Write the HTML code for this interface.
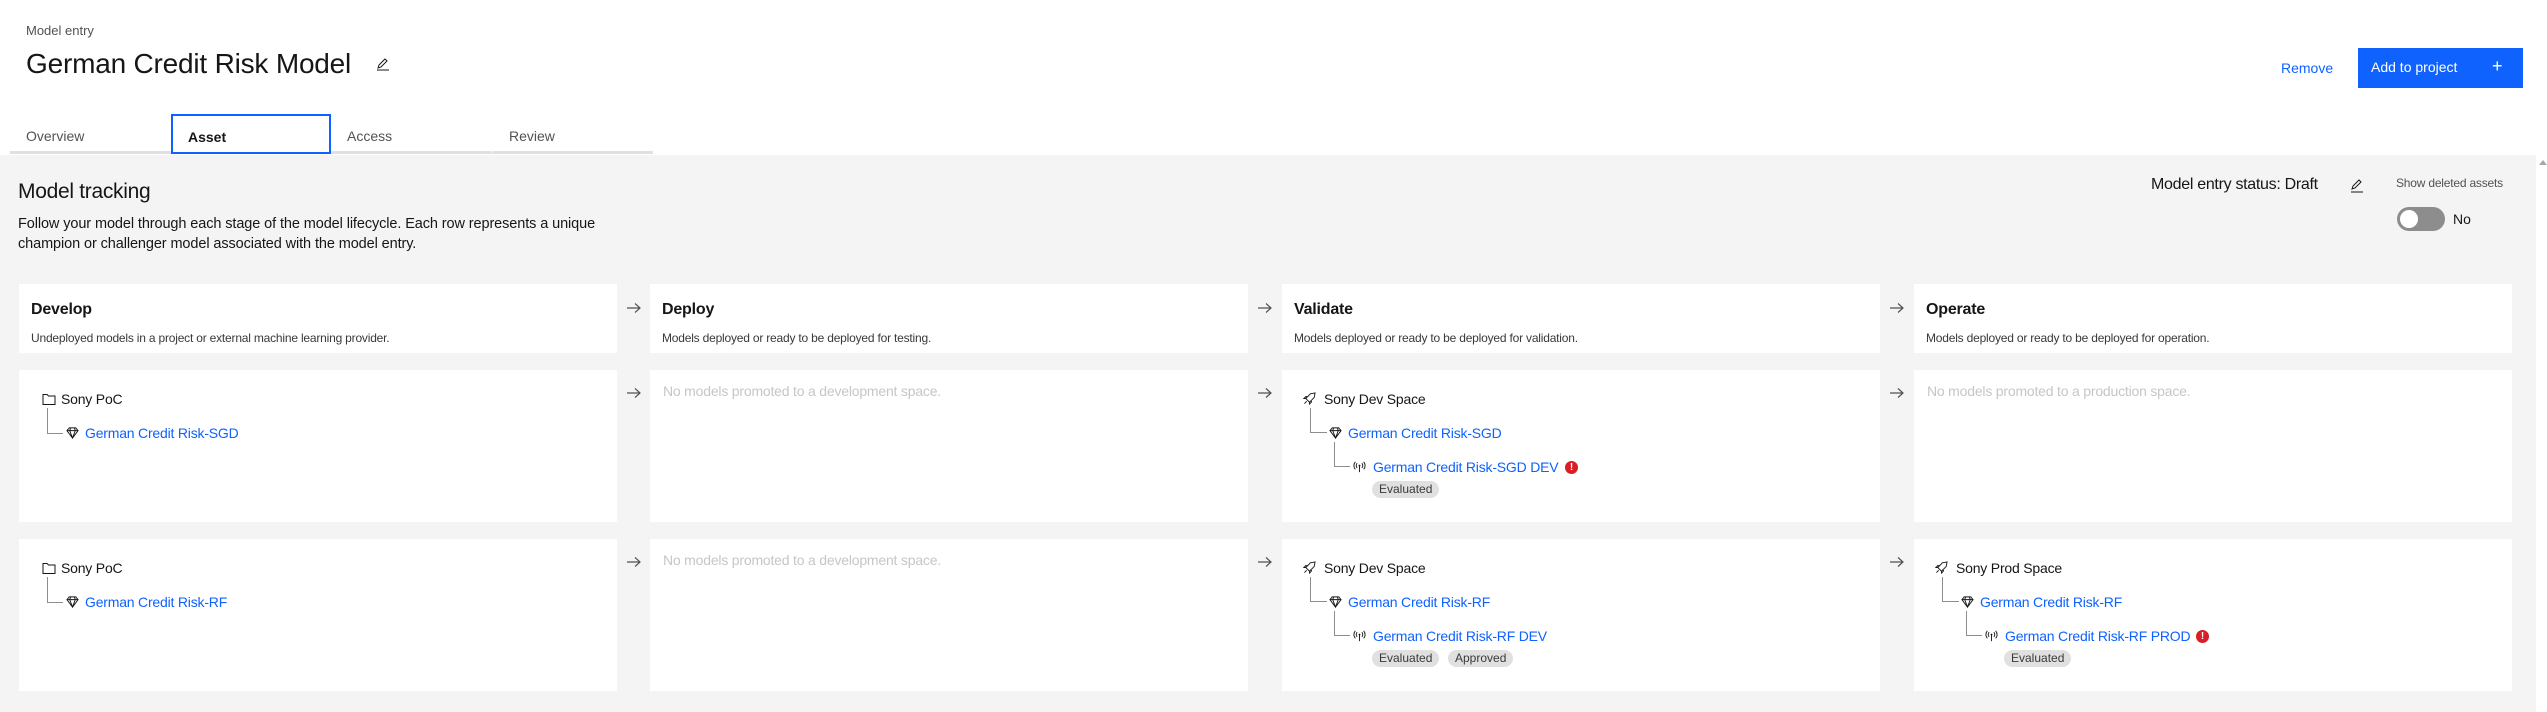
<!DOCTYPE html>
<html><head><meta charset="utf-8"><style>
*{margin:0;padding:0;box-sizing:border-box}
body{width:2547px;height:712px;overflow:hidden;background:#fff;font-family:"Liberation Sans",sans-serif;color:#161616;position:relative}
.a{position:absolute;white-space:nowrap}
.gray{position:absolute;left:0;top:155px;width:2536px;height:557px;background:#f4f4f4}
.card{position:absolute;background:#fff;width:598px}
.hd{top:284px;height:69px}
.r1{top:370px;height:152px}
.r2{top:539px;height:152px}
.ht{position:absolute;left:12px;top:17px;font-size:16px;font-weight:bold;letter-spacing:-.2px}
.hdsc{position:absolute;left:12px;top:47px;font-size:12px;color:#393939;letter-spacing:-.2px}
.none{position:absolute;left:13px;top:13px;font-size:14px;color:#c6c6c6;letter-spacing:-.2px}
.arrow{position:absolute;width:16px;height:12px}
.lnk{color:#0f62fe;font-size:14px;letter-spacing:-.2px}
.txt{font-size:14px;letter-spacing:-.2px}
.vl{position:absolute;border-left:1px solid #8d8d8d;border-bottom:1px solid #8d8d8d}
.tag{position:absolute;background:#e0e0e0;border-radius:9px;height:17px;font-size:12px;color:#393939;line-height:17px;padding:0 7px}
.err{position:absolute;width:13px;height:13px;border-radius:50%;background:#da1e28;color:#fff;font-size:10px;font-weight:bold;text-align:center;line-height:13px}
.tab{position:absolute;top:114px;height:40px;width:161px;border-bottom:3px solid #e0e0e0;font-size:14px;color:#525252;padding:14px 0 0 16px}
</style></head><body>
<svg width="0" height="0" style="position:absolute">
<defs>
<symbol id="arr" viewBox="0 0 16 12"><path d="M1 6 H14 M9 1.5 L14 6 L9 10.5" fill="none" stroke="#525252" stroke-width="1.2"/></symbol>
<symbol id="fold" viewBox="0 0 14 14"><path d="M1 2.5 H5 L6.5 4 H13 V12.5 H1 Z" fill="none" stroke="#161616" stroke-width="1"/></symbol>
<symbol id="dia" viewBox="0 0 14 14"><path d="M3.5 2 H10.5 L13 5 L7 13 L1 5 Z M1 5 H13 M5 2 L4 5 L7 13 L10 5 L9 2" fill="none" stroke="#161616" stroke-width="1"/></symbol>
<symbol id="ant" viewBox="0 0 14 14"><path d="M7 6 V13 M4.5 3.5 A3.5 3.5 0 0 0 4.5 8.5 M9.5 3.5 A3.5 3.5 0 0 1 9.5 8.5 M2.5 2 A6 6 0 0 0 2.5 10 M11.5 2 A6 6 0 0 1 11.5 10" fill="none" stroke="#161616" stroke-width="1"/><circle cx="7" cy="6" r="1" fill="#161616"/></symbol>
<symbol id="rock" viewBox="0 0 14 14"><path d="M13 1 L8 2 L3 7 L7 11 L12 6 Z M3 7 L1 7 L3 5 L5 5 M7 11 L7 13 L9 11 L9 9 M4 10 L1.5 12.5" fill="none" stroke="#161616" stroke-width="1"/></symbol>
</defs></svg>
<div class="a" style="left:26px;top:23px;font-size:13px;color:#525252">Model entry</div>
<div class="a" style="left:26px;top:48px;font-size:28px;letter-spacing:-.2px">German Credit Risk Model</div>
<svg class="a" style="left:376px;top:57px" width="14" height="14" viewBox="0 0 14 14"><path d="M2 11 L3 8 L9 2 L11 4 L5 10 Z M1 13 H13" fill="none" stroke="#161616" stroke-width="1"/></svg>
<div class="a" style="left:2281px;top:60px;font-size:14px;color:#0f62fe">Remove</div>
<div class="a" style="left:2358px;top:48px;width:165px;height:40px;background:#0f62fe;color:#fff;font-size:14px;padding:11px 0 0 13px">Add to project<span style="position:absolute;left:134px;top:8px;font-size:18px">+</span></div>
<div class="tab" style="left:10px">Overview</div>
<div class="tab" style="left:171px;border:2px solid #0f62fe;color:#161616;font-weight:bold;padding:13px 0 0 15px;width:160px">Asset</div>
<div class="tab" style="left:331px">Access</div>
<div class="tab" style="left:492px;border-left:1px solid #fff">Review</div>
<div class="gray"></div>
<div style="position:absolute;left:2536px;top:155px;width:11px;height:557px;background:#fff"></div>
<div class="a" style="left:2539px;top:160px;width:0;height:0;border-left:4px solid transparent;border-right:4px solid transparent;border-bottom:5px solid #a8a8a8"></div>
<div class="a" style="left:18px;top:180px;font-size:21px;letter-spacing:-.3px">Model tracking</div>
<div class="a" style="left:18px;top:214px;font-size:14.5px;line-height:20px;letter-spacing:-.1px">Follow your model through each stage of the model lifecycle. Each row represents a unique<br>champion or challenger model associated with the model entry.</div>
<div class="a" style="left:2151px;top:176px;font-size:16px;letter-spacing:-.3px">Model entry status: Draft</div>
<svg class="a" style="left:2350px;top:177px" width="14" height="16" viewBox="0 0 14 16"><path d="M2 12 L3 9 L9 3 L11 5 L5 11 Z M1 15 H13" fill="none" stroke="#161616" stroke-width="1"/></svg>
<div class="a" style="left:2396px;top:176px;font-size:12px;color:#525252;letter-spacing:-.2px">Show deleted assets</div>
<div class="a" style="left:2397px;top:207px;width:48px;height:24px;border-radius:12px;background:#8d8d8d"></div>
<div class="a" style="left:2400px;top:210px;width:18px;height:18px;border-radius:50%;background:#fff"></div>
<div class="a" style="left:2453px;top:211px;font-size:14px">No</div>

<div class="card hd" style="left:19px"><div class="ht">Develop</div><div class="hdsc">Undeployed models in a project or external machine learning provider.</div></div>
<div class="card hd" style="left:650px"><div class="ht">Deploy</div><div class="hdsc">Models deployed or ready to be deployed for testing.</div></div>
<div class="card hd" style="left:1282px"><div class="ht">Validate</div><div class="hdsc">Models deployed or ready to be deployed for validation.</div></div>
<div class="card hd" style="left:1914px"><div class="ht">Operate</div><div class="hdsc">Models deployed or ready to be deployed for operation.</div></div>

<svg class="arrow" style="left:626px;top:302px"><use href="#arr"/></svg>
<svg class="arrow" style="left:1257px;top:302px"><use href="#arr"/></svg>
<svg class="arrow" style="left:1889px;top:302px"><use href="#arr"/></svg>
<svg class="arrow" style="left:626px;top:387px"><use href="#arr"/></svg>
<svg class="arrow" style="left:1257px;top:387px"><use href="#arr"/></svg>
<svg class="arrow" style="left:1889px;top:387px"><use href="#arr"/></svg>
<svg class="arrow" style="left:626px;top:556px"><use href="#arr"/></svg>
<svg class="arrow" style="left:1257px;top:556px"><use href="#arr"/></svg>
<svg class="arrow" style="left:1889px;top:556px"><use href="#arr"/></svg>

<div class="card r1" style="left:19px"></div>
<div class="card r1" style="left:650px"><div class="none">No models promoted to a development space.</div></div>
<div class="card r1" style="left:1282px"></div>
<div class="card r1" style="left:1914px"><div class="none">No models promoted to a production space.</div></div>
<div class="card r2" style="left:19px"></div>
<div class="card r2" style="left:650px"><div class="none">No models promoted to a development space.</div></div>
<div class="card r2" style="left:1282px"></div>
<div class="card r2" style="left:1914px"></div>

<svg class="a" style="left:42px;top:392px" width="14" height="14"><use href="#fold"/></svg>
<div class="a txt" style="left:61px;top:391px">Sony PoC</div>
<div class="vl" style="left:47px;top:408px;width:16px;height:26px"></div>
<svg class="a" style="left:66px;top:426px" width="13" height="13"><use href="#dia"/></svg>
<div class="a lnk" style="left:85px;top:425px">German Credit Risk-SGD</div>
<svg class="a" style="left:42px;top:561px" width="14" height="14"><use href="#fold"/></svg>
<div class="a txt" style="left:61px;top:560px">Sony PoC</div>
<div class="vl" style="left:47px;top:577px;width:16px;height:26px"></div>
<svg class="a" style="left:66px;top:595px" width="13" height="13"><use href="#dia"/></svg>
<div class="a lnk" style="left:85px;top:594px">German Credit Risk-RF</div>

<svg class="a" style="left:1303px;top:392px" width="13" height="13"><use href="#rock"/></svg>
<div class="a txt" style="left:1324px;top:391px">Sony Dev Space</div>
<div class="vl" style="left:1310px;top:408px;width:17px;height:25px"></div>
<svg class="a" style="left:1329px;top:426px" width="13" height="13"><use href="#dia"/></svg>
<div class="a lnk" style="left:1348px;top:425px">German Credit Risk-SGD</div>
<div class="vl" style="left:1334px;top:442px;width:16px;height:25px"></div>
<svg class="a" style="left:1353px;top:460px" width="13" height="13"><use href="#ant"/></svg>
<div class="a lnk" style="left:1373px;top:459px">German Credit Risk-SGD DEV</div>
<div class="err" style="left:1565px;top:461px">!</div>
<div class="tag" style="left:1372px;top:481px">Evaluated</div>
<svg class="a" style="left:1303px;top:561px" width="13" height="13"><use href="#rock"/></svg>
<div class="a txt" style="left:1324px;top:560px">Sony Dev Space</div>
<div class="vl" style="left:1310px;top:577px;width:17px;height:25px"></div>
<svg class="a" style="left:1329px;top:595px" width="13" height="13"><use href="#dia"/></svg>
<div class="a lnk" style="left:1348px;top:594px">German Credit Risk-RF</div>
<div class="vl" style="left:1334px;top:611px;width:16px;height:25px"></div>
<svg class="a" style="left:1353px;top:629px" width="13" height="13"><use href="#ant"/></svg>
<div class="a lnk" style="left:1373px;top:628px">German Credit Risk-RF DEV</div>
<div class="tag" style="left:1372px;top:650px">Evaluated</div>
<div class="tag" style="left:1448px;top:650px">Approved</div>
<svg class="a" style="left:1935px;top:561px" width="13" height="13"><use href="#rock"/></svg>
<div class="a txt" style="left:1956px;top:560px">Sony Prod Space</div>
<div class="vl" style="left:1942px;top:577px;width:17px;height:25px"></div>
<svg class="a" style="left:1961px;top:595px" width="13" height="13"><use href="#dia"/></svg>
<div class="a lnk" style="left:1980px;top:594px">German Credit Risk-RF</div>
<div class="vl" style="left:1966px;top:611px;width:16px;height:25px"></div>
<svg class="a" style="left:1985px;top:629px" width="13" height="13"><use href="#ant"/></svg>
<div class="a lnk" style="left:2005px;top:628px">German Credit Risk-RF PROD</div>
<div class="err" style="left:2196px;top:630px">!</div>
<div class="tag" style="left:2004px;top:650px">Evaluated</div>
</body></html>
